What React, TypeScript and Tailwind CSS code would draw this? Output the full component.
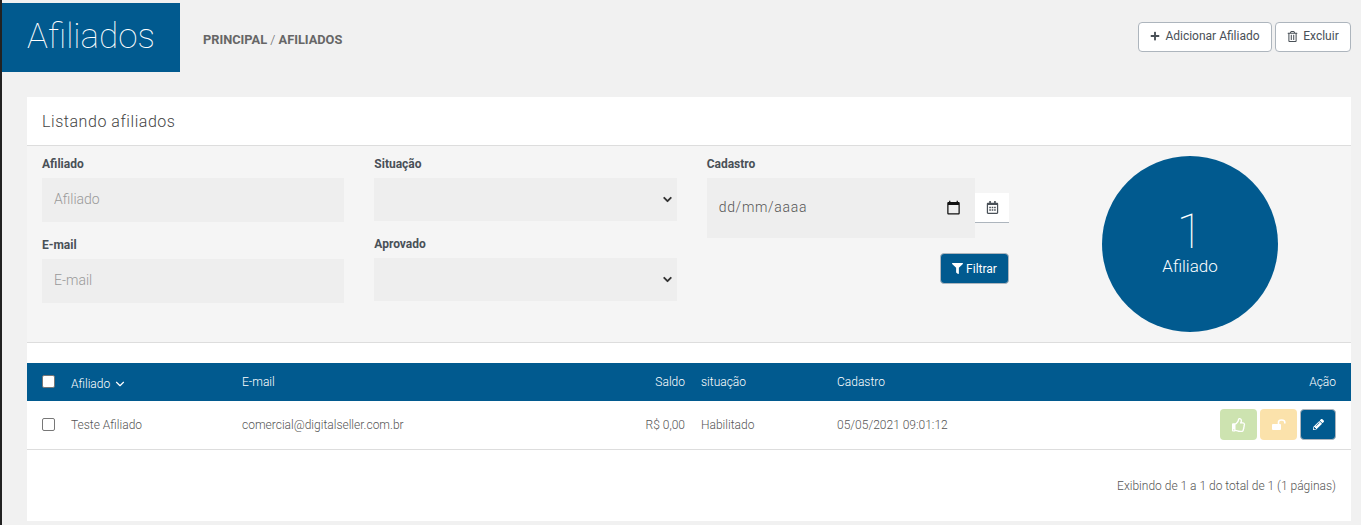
import { ChevronDown } from "lucide-react";
import { FaFilter, FaPencilAlt, FaPlus, FaRegCalendarAlt, FaRegThumbsUp, FaRegTrashAlt } from "react-icons/fa";
import { MdCalendarToday } from "react-icons/md";

function Label({ children }: { children: string }) {
  return <label className="block text-xs font-bold leading-[16px] text-[#495057]">{children}</label>;
}

function TextField({ label, placeholder }: { label: string; placeholder: string }) {
  return (
    <div>
      <Label>{label}</Label>
      <input
        placeholder={placeholder}
        className="mt-[6px] block h-[44px] w-full bg-[#eeeeee] px-3 pb-[2px] text-sm font-light text-[#495057] outline-none placeholder:text-[#999]"
      />
    </div>
  );
}

function SelectField({ label }: { label: string }) {
  return (
    <div>
      <Label>{label}</Label>
      <div className="relative mt-[6px] h-[43px] bg-[#eeeeee]">
        <select className="block h-full w-full appearance-none bg-transparent px-3 text-sm outline-none" />
        <ChevronDown className="pointer-events-none absolute right-[3px] top-[15px] h-[13px] w-[13px] text-[#333]" strokeWidth={3.5} />
      </div>
    </div>
  );
}

function ActionButton({ className, children }: { className: string; children: React.ReactNode }) {
  return <button className={`flex h-[31px] items-center justify-center rounded text-sm text-white ${className}`}>{children}</button>;
}

// fa-unlock: solid body with the open shackle on the upper right
function UnlockIcon() {
  return (
    <svg viewBox="0 0 14 11" className="h-[11px] w-[14px]" fill="none">
      <rect x="0" y="5" width="9" height="6" rx="1" fill="currentColor" />
      <path d="M6.5 5V3.2C6.5 1.9 7.6 1 9.5 1S12.8 1.9 12.8 3.2V4.5" stroke="currentColor" strokeWidth="1.6" />
    </svg>
  );
}

export default function App() {
  return (
    <div className="h-[525px] overflow-hidden border-l-2 border-[#222] bg-[#f1f1f1] font-['Roboto',sans-serif] text-[#555]">
      <header className="flex h-[97px] items-start pt-[3px]">
        <div className="flex h-[69px] w-[178px] items-center bg-[#015a8f] pl-[25px] text-[35px] font-thin text-white">Afiliados</div>
        <div className="ml-[23px] mt-[30px] text-[12.8px] leading-[14px] text-[#666]">
          <b>PRINCIPAL</b> <span className="font-light">/</span> <b>AFILIADOS</b>
        </div>
        <div className="ml-auto mr-[10px] mt-[19px] flex gap-[3px]">
          <button className="flex h-[30px] w-[134px] items-center justify-center gap-[5px] rounded border border-[#adb5bd] bg-white pb-[2px] text-xs text-[#495057]">
            <FaPlus className="h-[10px] w-[10px]" />
            Adicionar Afiliado
          </button>
          <button className="flex h-[30px] w-[76px] items-center justify-center gap-[5px] rounded border border-[#adb5bd] bg-white pb-[2px] text-xs text-[#495057]">
            <FaRegTrashAlt className="h-[11px] w-[11px]" />
            Excluir
          </button>
        </div>
      </header>

      <main className="ml-[25px] mr-[10px] h-[424px] bg-white">
        <div className="h-[49px] border-b border-[#ddd] pl-[15px] pt-[15px] text-base font-light leading-[20px] tracking-[0.55px] text-[#444]">Listando afiliados</div>

        <section className="flex h-[197px] border-b border-[#ddd] bg-[#f5f5f5] px-[15px] pt-[10px]">
          <div className="grid h-fit w-[967px] grid-cols-3 gap-x-[30px]">
            <div className="flex flex-col gap-[15px]">
              <TextField label="Afiliado" placeholder="Afiliado" />
              <TextField label="E-mail" placeholder="E-mail" />
            </div>
            <div className="flex flex-col gap-[15px]">
              <SelectField label="Situação" />
              <SelectField label="Aprovado" />
            </div>
            <div>
              <Label>Cadastro</Label>
              <div className="mt-[6px] flex items-start">
                <div className="flex h-[60px] flex-1 items-center justify-between bg-[#eeeeee] pb-[2px] pl-3 pr-[14px] text-sm font-light tracking-[0.7px] text-[#555]">
                  dd/mm/aaaa
                  <MdCalendarToday className="h-[15px] w-[15px] text-[#111]" />
                </div>
                <div className="mt-[15px] flex h-[30px] w-[34px] items-center justify-center border-b border-[#adb5bd] bg-white text-[#495057]">
                  <FaRegCalendarAlt className="h-[13px] w-[13px]" />
                </div>
              </div>
              <div className="mt-[15px] flex justify-end">
                <button className="flex h-[31px] w-[69px] items-center justify-center gap-[3px] rounded border border-[#adb5bd] bg-[#015a8f] text-xs text-white">
                  <FaFilter className="h-[11px] w-[11px]" />
                  Filtrar
                </button>
              </div>
            </div>
          </div>
          <div className="ml-[93px] flex h-[176px] w-[176px] flex-col items-center justify-center rounded-full bg-[#015a8f] pb-[2px] text-white">
            <div className="text-[48px] font-thin leading-[45px]">1</div>
            <div className="text-[17px] font-light leading-[24px]">Afiliado</div>
          </div>
        </section>

        <div className="h-[20px]" />

        <table className="w-full table-fixed border-collapse text-xs font-light">
          <colgroup>
            <col className="w-[29px]" />
            <col className="w-[171px]" />
            <col className="w-[459px]" />
            <col className="w-[136px]" />
            <col className="w-[278px]" />
            <col />
          </colgroup>
          <thead>
            <tr className="h-[38px] bg-[#015a8f] text-left text-white">
              <th className="pb-[2px] pl-[15px] font-light">
                <input type="checkbox" className="block h-[13px] w-[13px] appearance-none rounded-[2px] border border-[#777] bg-white" />
              </th>
              <th className="pl-[15px] pt-[3px] font-light">
                <span className="flex items-center gap-[3px]">
                  Afiliado <ChevronDown className="h-[14px] w-[14px]" strokeWidth={2} />
                </span>
              </th>
              <th className="pb-[1px] pl-[15px] font-light">
                <div className="flex items-center justify-between">
                  E-mail
                  <span className="pr-px">Saldo</span>
                </div>
              </th>
              <th className="pb-[1px] pl-[15px] font-light">situação</th>
              <th className="pb-[1px] pl-[15px] font-light">Cadastro</th>
              <th className="pb-[1px] pr-[15px] text-right font-light">Ação</th>
            </tr>
          </thead>
          <tbody>
            <tr className="h-[48px] border-b border-[#ddd] text-[#555]">
              <td className="pl-[15px]">
                <input type="checkbox" className="block h-[13px] w-[13px] appearance-none rounded-[2px] border border-[#777] bg-white" />
              </td>
              <td className="pl-[15px]">Teste Afiliado</td>
              <td className="pl-[15px]">
                <div className="flex items-center justify-between">
                  comercial@digitalseller.com.br
                  <span className="pr-px">R$ 0,00</span>
                </div>
              </td>
              <td className="pl-[15px]">Habilitado</td>
              <td className="pl-[15px]">05/05/2021 09:01:12</td>
              <td className="pr-[15px]">
                <div className="flex justify-end gap-[3px]">
                  <ActionButton className="w-[37px] bg-[#cde3b0]"><FaRegThumbsUp /></ActionButton>
                  <ActionButton className="w-[37px] bg-[#fbe2ab]"><UnlockIcon /></ActionButton>
                  <ActionButton className="w-[36px] border border-[#adb5bd] bg-[#015a8f]"><FaPencilAlt className="h-[11px] w-[11px]" /></ActionButton>
                </div>
              </td>
            </tr>
          </tbody>
        </table>

        <div className="pr-[15px] pt-[29px] text-right text-xs font-light leading-[14px] text-[#555]">Exibindo de 1 a 1 do total de 1 (1 páginas)</div>
      </main>
    </div>
  );
}
